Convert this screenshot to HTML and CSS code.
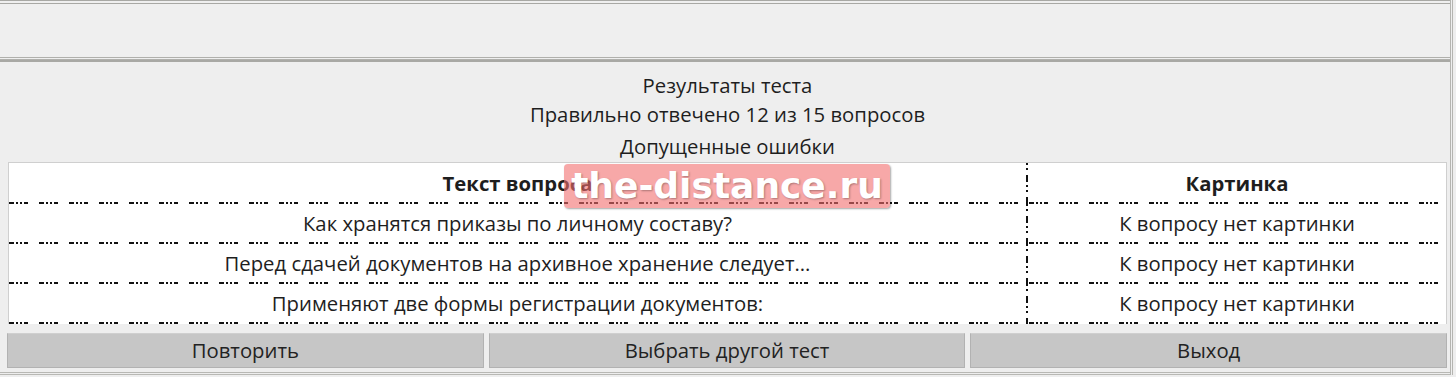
FILE: index.html
```html
<!DOCTYPE html>
<html lang="ru">
<head>
<meta charset="utf-8">
<title>Результаты теста</title>
<link rel="stylesheet" href="styles.css">
</head>
<body>
<div class="frame">
  <div class="panel-top"></div>
  <div class="panel-main">
    <div class="line">Результаты теста</div>
    <div class="line">Правильно отвечено 12 из 15 вопросов</div>
    <div class="line line-gap">Допущенные ошибки</div>
    <div class="table">
      <div class="row head">
        <div class="cell c1">Текст вопроса</div>
        <div class="cell c2">Картинка</div>
      </div>
      <div class="row">
        <div class="cell c1">Как хранятся приказы по личному составу?</div>
        <div class="cell c2">К вопросу нет картинки</div>
      </div>
      <div class="row">
        <div class="cell c1">Перед сдачей документов на архивное хранение следует...</div>
        <div class="cell c2">К вопросу нет картинки</div>
      </div>
      <div class="row">
        <div class="cell c1">Применяют две формы регистрации документов:</div>
        <div class="cell c2">К вопросу нет картинки</div>
      </div>
      <div class="watermark">the-distance.ru</div>
    </div>
    <div class="buttons">
      <div class="btn">Повторить</div>
      <div class="btn">Выбрать другой тест</div>
      <div class="btn">Выход</div>
    </div>
  </div>
</div>
</body>
</html>
```

FILE: styles.css
```css
html, body {
  margin: 0;
  padding: 0;
  background: #eeeeee;
}
body {
  font-family: "Open Sans", "Noto Sans", sans-serif;
  font-size: 20.3px;
  color: #1e1e1e;
  width: 1456px;
  height: 377px;
  overflow: hidden;
}
.frame {
  width: 1450px;
  border-right: 3px double #b4b4b0;
}
.panel-top {
  height: 53px;
  border-top: 4px double #a8a8a4;
  border-bottom: 3px double #b0b0ac;
  background: #efefef;
}
.panel-main {
  border-top: 2px solid #a8a8a4;
  border-bottom: 3px double #b8b8b4;
  background: #eeeeee;
  padding: 9px 3px 5px 8px;
  height: 296px;
}
.line {
  height: 29px;
  line-height: 29px;
  text-align: center;
}
.line-gap {
  margin-top: 3px;
}
.table {
  position: relative;
  margin-top: 1px;
  background: #ffffff;
  border: 1px solid #cfcfcf;
  border-bottom: none;
}
.row {
  display: grid;
  grid-template-columns: 1017px 2px 1fr;
  height: 40px;
  background-image: repeating-linear-gradient(to right,
      #111 0 5px, transparent 5px 7px,
      #111 7px 9px, transparent 9px 11px,
      #111 11px 13px, transparent 13px 15px,
      #111 15px 19px, transparent 19px 30px);
  background-size: 100% 2px;
  background-position: 0 100%;
  background-repeat: no-repeat;
}
.row.head {
  height: 41px;
  font-weight: 700;
}
.cell {
  display: flex;
  align-items: center;
  justify-content: center;
  padding-bottom: 2px;
  box-sizing: border-box;
}
.c1 {
  grid-column: 1;
}
.c2 {
  grid-column: 3;
}
.row::after {
  content: "";
  grid-column: 2;
  grid-row: 1;
  background-image: repeating-linear-gradient(to bottom,
      #111 0 2px, transparent 2px 5px,
      #111 5px 7px, transparent 7px 12px,
      #111 12px 19px, transparent 19px 22px);
}
.watermark {
  position: absolute;
  left: 555px;
  top: 1px;
  width: 326px;
  height: 44px;
  border-radius: 4px;
  background: rgba(242, 110, 110, 0.6);
  box-shadow: 1px 1px 2px rgba(0, 0, 0, 0.35);
  color: #ffffff;
  font-family: "DejaVu Sans", sans-serif;
  font-weight: 700;
  font-size: 36px;
  line-height: 44px;
  text-align: center;
  text-shadow: 1px 1px 2px rgba(0, 0, 0, 0.3);
  white-space: nowrap;
  overflow: hidden;
}
.buttons {
  display: flex;
  gap: 5px;
  margin-top: 9px;
  margin-left: -1px;
}
.btn {
  flex: 1;
  height: 33px;
  line-height: 33px;
  text-align: center;
  background: #c6c6c6;
  border: 1px solid #b2b2b2;
  border-top-color: #cfcfcf;
  color: #222;
}
```
